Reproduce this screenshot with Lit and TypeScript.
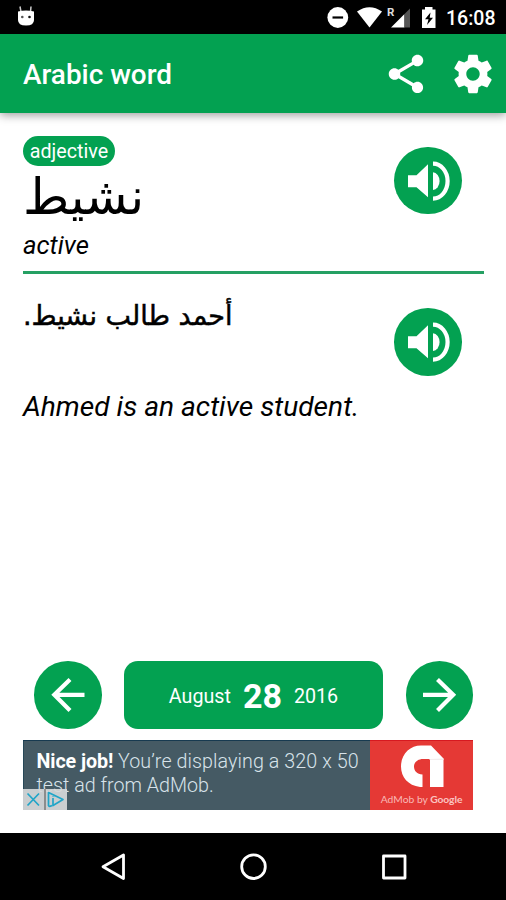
import { LitElement, html, css, svg } from "lit";
import { customElement, property } from "lit/decorators.js";

const speaker = svg`<path fill="#fff" d="M14 25h8.500l11.500-11v33L22.500 37h-8.500z"/><path fill="#fff" d="M39 22a6.600 8.800 0 0 1 0 17.600z"/><path fill="none" stroke="#fff" stroke-width="4.200" d="M39 13.300a14.600 17.500 0 0 1 0 35"/>`;
const arrowBack = svg`<path fill="none" stroke="#fff" stroke-width="4.200" d="M50.500 33.800H19.500M36 18.500L20.300 33.800L36 49.500"/>`;
const arrowNext = svg`<path fill="none" stroke="#fff" stroke-width="4.200" d="M17 33.800H48M31.500 18.500L47.200 33.800L31.500 49.500"/>`;

@customElement("round-button")
class RoundButton extends LitElement {
  @property() icon = "speaker";
  static styles = css`
    :host { display: block; width: 67.500px; height: 67.500px; border-radius: 50%; background: #03a151; flex: none; }
    svg { display: block; width: 67.500px; height: 67.500px; }
  `;
  render() {
    const shape =
      this.icon === "back" ? arrowBack : this.icon === "next" ? arrowNext : svg`<g transform="translate(0 3.300)">${speaker}</g>`;
    return html`<svg viewBox="0 0 67.5 67.5">${shape}</svg>`;
  }
}

@customElement("status-bar")
class StatusBar extends LitElement {
  static styles = css`
    :host { display: flex; height: 34px; background: #000; color: #fff; align-items: center; padding-right: 11px; box-sizing: border-box; }
    svg { display: block; }
    .droid { margin-left: 17px; margin-right: auto; }
    .time { font: 500 19.500px/34px Roboto, sans-serif; width: 49px; margin: 3px 0 0 8px; white-space: nowrap; height: 34px; }
  `;
  render() {
    return html`
      <svg class="droid" width="18" height="34" viewBox="0 0 18 34">
        <path d="M4 12L3 6.500M13.500 12L14 6.500" stroke="#ccc" stroke-width="1.500" />
        <path d="M1 11.500Q9 9.500 17 11.500V20Q17 25.500 9 25.500Q1 25.500 1 20Z" fill="#fff" />
        <circle cx="5.300" cy="17" r="1.300" fill="#555" /><circle cx="12.500" cy="17" r="1.300" fill="#111" />
      </svg>
      <svg width="111" height="34" viewBox="327 0 111 34">
        <circle cx="337.800" cy="17.500" r="10.400" fill="#fff" />
        <path d="M332.500 17.500h10.600" stroke="#000" stroke-width="2.200" />
        <path d="M357 11.500Q369.500 3 382 11.500L369.500 27.500Z" fill="#fff" />
        <text x="387" y="16" fill="#ddd" font-family="Roboto, sans-serif" font-size="11.500" font-weight="700">R</text>
        <path d="M391 27.500L404.500 14V27.500Z" fill="#fff" />
        <path d="M404.500 14L410 8.500V27.500H404.500Z" fill="#555" />
        <path d="M422 9.500h3V7h7.500v2.500h3V28H422Z" fill="#fff" />
        <path d="M430.500 12.500L425 19.200h3.500L427 25L433 17.800h-3.300Z" fill="#000" />
      </svg>
      <span class="time">16:08</span>
    `;
  }
}

@customElement("ad-banner")
class AdBanner extends LitElement {
  static styles = css`
    :host { display: flex; position: relative; width: 450px; height: 70px; background: #455a64; box-shadow: inset 0 1px #173a50, inset 1px 0 #274858; }
    .copy { width: 347px; padding: 10px 0 0 13.500px; box-sizing: border-box; font: 300 19.700px/23.500px Roboto, sans-serif; color: #d8e3ea; white-space: nowrap; }
    b { color: #fff; font-weight: 700; letter-spacing: -0.100px; }
    .line { display: block; }
    .l1 { letter-spacing: 0.080px; }
    .brand { width: 103px; background: #e53935; box-shadow: inset 0 1px #d71920; display: flex; flex-direction: column; align-items: center; }
    .brand svg { display: block; margin-top: 4px; }
    .name { font: 400 10.300px/12px Lato, sans-serif; color: #f9b9b6; margin-top: 5px; white-space: nowrap; }
    .name b { font-weight: 700; color: #fbc4c1; }
    .choices { position: absolute; left: 0; bottom: 0; width: 44px; height: 21px; background: rgba(214, 216, 217, 0.92); }
  `;
  render() {
    return html`
      <div class="copy">
        <span class="line l1"><b>Nice job!</b> You’re displaying a 320 x 50</span>
        <span class="line">test ad from AdMob.</span>
      </div>
      <div class="brand">
        <svg width="44" height="44" viewBox="0 0 44 44">
          <path fill="#fff" d="M22.500 43H20C8 41.500 1 33 1 22.500C1 10 10 1.500 21 1.500H31L43.500 14.500V43H30V15H23C17.500 15 14 18.500 14 22.500C14 27 17 30 22.500 30.500Z" />
          <path fill="#f3eded" d="M29.500 15L43.500 14.500V16H29.500Z" />
        </svg>
        <div class="name">AdMob by <b>Google</b></div>
      </div>
      <div class="choices">
        <svg width="44" height="21" viewBox="0 0 44 21" fill="none" stroke="#20a5c8" stroke-width="1.700">
          <path d="M4.500 4.500L16 16.500M16 4.500L4.500 16.500" />
          <path d="M22 0V21" stroke="#777" stroke-width="1.500" />
          <path d="M25.500 17V3.500L40 10.500L30 16.500V9M30 5.500V7.500M25.500 17Q26.500 18 29 16.500" stroke-linejoin="round" />
        </svg>
      </div>
    `;
  }
}

@customElement("app-root")
class AppRoot extends LitElement {
  static styles = css`
    :host { display: flex; flex-direction: column; width: 506px; height: 900px; background: #fff; font-family: Roboto, "DejaVu Sans", sans-serif; color: #000; overflow: hidden; }
    .bar { height: 79px; flex: none; background: #03a151; display: flex; align-items: center; box-shadow: 0 2px 9px rgba(0, 0, 0, 0.4); padding: 0 10px 0 23px; box-sizing: border-box; }
    h1 { margin: 2px auto 0 0; font-size: 27.900px; font-weight: 500; line-height: 32px; color: #fff; white-space: nowrap; }
    .bar svg { display: block; margin-left: 21px; }
    .entry { height: 161px; box-sizing: border-box; margin: 0 22px 0 23px; padding: 23px 22.500px 0 0; display: flex; justify-content: space-between; border-bottom: 3px solid #25a063; flex: none; }
    .word-col { width: 130px; }
    .badge { height: 30px; width: 92px; border-radius: 15px; background: #03a151; color: #fff; font-size: 19.700px; line-height: 32px; text-align: center; }
    .word { font: 50px/62px "DejaVu Sans", sans-serif; height: 65px; white-space: nowrap; width: max-content; }
    .gloss { font-size: 25.700px; line-height: 28px; font-style: italic; }
    .entry round-button { margin-top: 10.500px; }
    .example { height: 104px; margin: 0 44.500px 0 23px; padding-top: 34px; display: flex; justify-content: space-between; flex: none; }
    .sentence { font: 27px/30px "DejaVu Sans", sans-serif; -webkit-text-stroke: 0.500px #000; white-space: nowrap; margin-top: -7px; height: 30px; }
    .meaning { font-size: 28.150px; line-height: 34px; font-style: italic; margin: -22px 0 0 23px; white-space: nowrap; }
    .pager { display: flex; justify-content: space-between; margin: auto 33px 11.500px 34px; }
    .date { width: 259px; height: 67.500px; border-radius: 14px; background: #03a151; color: #fff; display: flex; align-items: center; justify-content: center; gap: 12px; font-size: 19.700px; padding-top: 3px; box-sizing: border-box; }
    .date b { font-size: 34px; font-weight: 700; }
    ad-banner { margin: 0 0 23px 23px; flex: none; }
    .nav { height: 67px; background: #000; flex: none; }
    .nav svg { display: block; }
  `;
  render() {
    return html`
      <status-bar></status-bar>
      <header class="bar">
        <h1>Arabic word</h1>
        <svg width="46" height="46" viewBox="0 0 24 24" fill="#fff"><path d="M18 16.080c-.76 0-1.440.3-1.960.77L8.910 12.700c.05-.23.09-.46.09-.7s-.04-.47-.09-.7l7.050-4.110c.54.5 1.250.81 2.040.81 1.660 0 3-1.340 3-3s-1.340-3-3-3-3 1.340-3 3c0 .24.04.47.09.7L8.040 9.810C7.500 9.310 6.790 9 6 9c-1.660 0-3 1.340-3 3s1.340 3 3 3c.79 0 1.500-.31 2.040-.81l7.120 4.160c-.05.21-.08.43-.08.65 0 1.610 1.310 2.920 2.920 2.920s2.920-1.310 2.920-2.920-1.310-2.920-2.920-2.920z" /></svg>
        <svg width="46" height="46" viewBox="0 0 24 24" fill="#fff"><path d="M19.430 12.980c.04-.32.07-.64.07-.98s-.03-.66-.07-.98l2.110-1.650c.19-.15.24-.42.12-.64l-2-3.460c-.12-.22-.39-.3-.61-.22l-2.490 1c-.52-.4-1.080-.73-1.690-.98l-.38-2.650C14.460 2.180 14.250 2 14 2h-4c-.25 0-.46.18-.49.42l-.38 2.650c-.61.25-1.170.59-1.690.98l-2.490-1c-.23-.09-.49 0-.61.22l-2 3.460c-.13.22-.07.49.12.64l2.110 1.650c-.04.32-.07.65-.07.98s.03.66.07.98l-2.110 1.650c-.19.15-.24.42-.12.64l2 3.460c.12.22.39.3.61.22l2.490-1c.52.4 1.080.73 1.690.98l.38 2.650c.03.24.24.42.49.42h4c.25 0 .46-.18.49-.42l.38-2.650c.61-.25 1.170-.59 1.690-.98l2.490 1c.23.09.49 0 .61-.22l2-3.460c.12-.22.07-.49-.12-.64l-2.110-1.650zM12 15.500c-1.930 0-3.500-1.570-3.500-3.500s1.570-3.500 3.500-3.500 3.500 1.570 3.500 3.500-1.570 3.500-3.500 3.500z" /></svg>
      </header>
      <section class="entry">
        <div class="word-col">
          <div class="badge">adjective</div>
          <div class="word" dir="rtl">نشيط</div>
          <div class="gloss">active</div>
        </div>
        <round-button></round-button>
      </section>
      <section class="example">
        <div class="sentence" dir="rtl">أحمد طالب نشيط.</div>
        <round-button></round-button>
      </section>
      <div class="meaning">Ahmed is an active student.</div>
      <div class="pager">
        <round-button icon="back"></round-button>
        <div class="date"><span>August</span><b>28</b><span>2016</span></div>
        <round-button icon="next"></round-button>
      </div>
      <ad-banner></ad-banner>
      <nav class="nav">
        <svg width="506" height="67" viewBox="0 833 506 67" fill="none" stroke="#fff" stroke-width="2.800" stroke-linejoin="round">
          <path d="M123.500 855V878.500L103 866.800Z" />
          <circle cx="253.500" cy="866.700" r="11.800" />
          <rect x="383.500" y="856" width="21.500" height="22" />
        </svg>
      </nav>
    `;
  }
}
